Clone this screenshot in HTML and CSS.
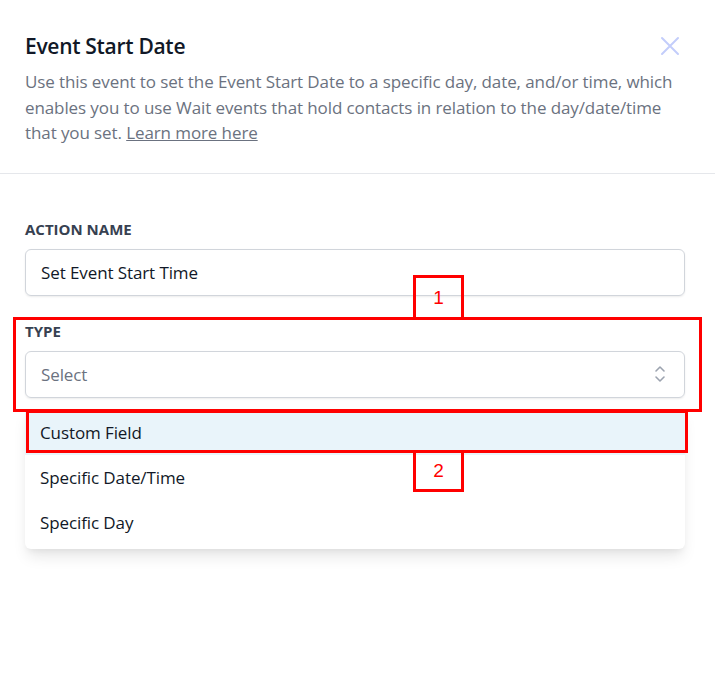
FILE: index.html
```html
<!DOCTYPE html>
<html>
<head>
<meta charset="utf-8">
<link rel="stylesheet" href="styles.css">
</head>
<body>
<div class="panel">
  <header class="header">
    <div class="title-row">
      <h1 class="title">Event Start Date</h1>
      <button class="close" aria-label="Close">
        <svg width="20" height="20" viewBox="0 0 20 20"><path d="M2 2L18 18M18 2L2 18" stroke="#c3cdfb" stroke-width="2" stroke-linecap="round"/></svg>
      </button>
    </div>
    <p class="desc">Use this event to set the Event Start Date to a specific day, date, and/or time, which enables you to use Wait events that hold contacts in relation to the day/date/time that you set. <a class="link" href="#">Learn more here</a></p>
  </header>
  <main class="body">
    <div class="field">
      <label class="label">ACTION NAME</label>
      <div class="input">Set Event Start Time</div>
    </div>
    <div class="field field-type">
      <label class="label">TYPE</label>
      <div class="select-wrap">
        <div class="input select">
          <span class="placeholder">Select</span>
          <svg class="chev" width="12" height="20" viewBox="0 0 12 20"><path d="M2 7L6 3L10 7M2 13L6 17L10 13" fill="none" stroke="#9ca3af" stroke-width="1.6" stroke-linecap="round" stroke-linejoin="round"/></svg>
        </div>
        <ul class="menu">
          <li class="opt active">Custom Field</li>
          <li class="opt">Specific Date/Time</li>
          <li class="opt">Specific Day</li>
        </ul>
      </div>
    </div>
  </main>
  <div class="anno anno-big"></div>
  <div class="anno anno-tag tag1">1</div>
  <div class="anno anno-row"></div>
  <div class="anno anno-tag tag2">2</div>
</div>
</body>
</html>
```

FILE: styles.css
```css
* { box-sizing: border-box; }
body {
  margin: 0;
  background: #fff;
  font-family: "Open Sans", "Noto Sans", sans-serif;
  color: #111827;
}
.panel {
  position: relative;
  width: 715px;
  height: 681px;
  overflow: hidden;
}
.header {
  padding: 32px 25px 27px 25px;
  border-bottom: 1px solid #e5e7eb;
}
.title-row {
  display: flex;
  justify-content: space-between;
  align-items: center;
}
.title {
  margin: 0;
  font-size: 21px;
  font-weight: 600;
  line-height: 28px;
  color: #111827;
  letter-spacing: -0.3px;
}
.close {
  background: none;
  border: 0;
  padding: 0;
  margin-right: 10px;
  width: 20px;
  height: 20px;
  display: flex;
}
.desc {
  margin: 9px 0 0 0;
  font-size: 17px;
  line-height: 25.5px;
  color: #6b7280;
  letter-spacing: -0.1px;
}
.link {
  color: #6b7280;
  text-decoration: underline;
}
.body {
  padding: 45px 30px 0 25px;
}
.field { display: flex; flex-direction: column; }
.label {
  font-size: 15px;
  font-weight: 700;
  color: #374151;
  line-height: 20px;
  margin-bottom: 10px;
}
.input {
  height: 47px;
  border: 1px solid #d1d5db;
  border-radius: 6px;
  box-shadow: 0 1px 2px rgba(0,0,0,0.08);
  padding: 0 15px;
  display: flex;
  align-items: center;
  font-size: 17px;
  color: #111827;
  letter-spacing: -0.1px;
}
.field-type { margin-top: 25px; }
.select-wrap { position: relative; }
.select { justify-content: space-between; padding-right: 18px; }
.placeholder { color: #6b7280; }
.menu {
  position: absolute;
  left: 0;
  right: 0;
  top: 55px;
  margin: 0;
  padding: 4px 0;
  list-style: none;
  background: #fff;
  border-radius: 6px;
  box-shadow: 0 10px 15px -3px rgba(0,0,0,0.1), 0 4px 6px -2px rgba(0,0,0,0.05);
}
.opt {
  height: 45px;
  display: flex;
  align-items: center;
  padding: 0 15px;
  font-size: 17px;
  color: #111827;
  letter-spacing: -0.1px;
}
.opt.active { background: #e9f4fa; }
.anno {
  position: absolute;
  border: 3px solid #ff0000;
}
.anno-big { left: 13px; top: 317px; width: 689px; height: 95px; }
.anno-row { left: 26px; top: 410px; width: 662px; height: 43px; }
.anno-tag {
  width: 51px;
  height: 42px;
  color: #ff0000;
  font-family: "Liberation Sans", Arial, sans-serif;
  font-size: 19px;
  display: flex;
  align-items: center;
  justify-content: center;
  background: transparent;
}
.tag1 { left: 413px; top: 275px; height: 45px; }
.tag2 { left: 413px; top: 450px; width: 51px; }
```
